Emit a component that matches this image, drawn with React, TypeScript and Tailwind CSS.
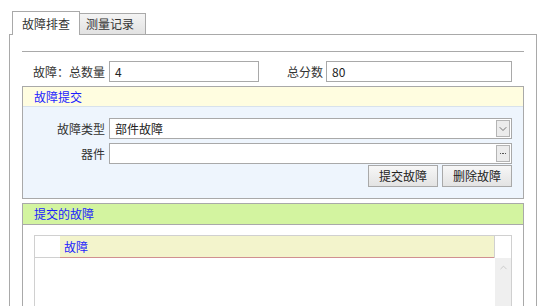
import { ChevronDown, ChevronUp } from "lucide-react";

const font = "font-['Microsoft_YaHei','Noto_Sans_CJK_SC',sans-serif]";

function Field({ value, width, addon }: { value: string; width: string; addon?: "select" | "more" }) {
  return (
    <div className={`flex h-[21px] items-center border border-[#a9a9a9] bg-white pl-[5px] pr-[1px] ${width}`}>
      <span className="flex-1 text-[12px] leading-none text-[#222]">{value}</span>
      {addon === "select" && (
        <span className="flex h-[17px] w-[14px] items-center justify-center border border-[#b4b4b4] bg-[#ececec]">
          <ChevronDown size={12} strokeWidth={1.6} className="text-[#555]" />
        </span>
      )}
      {addon === "more" && (
        <span className="flex h-[17px] w-[14px] items-center justify-center gap-[1px] border border-[#b4b4b4] bg-[#ececec]">
          <span className="h-[1.5px] w-[1.5px] bg-[#555]" />
          <span className="h-[1.5px] w-[1.5px] bg-[#555]" />
          <span className="h-[1.5px] w-[1.5px] bg-[#555]" />
        </span>
      )}
    </div>
  );
}

function Button({ label }: { label: string }) {
  return (
    <button className="h-[22px] w-[70px] border border-[#a9a9a9] bg-gradient-to-b from-[#f7f7f7] to-[#e3e3e3] text-[12px] leading-none text-[#222]">
      {label}
    </button>
  );
}

export default function App() {
  return (
    <div className={`h-[306px] w-[547px] overflow-hidden bg-white ${font}`}>
      <div className="ml-[9px] w-[528px] pt-[11px]">
        {/* tabs */}
        <div className="flex h-[23px] pl-[3px]">
          <div className="relative z-10 flex h-[24px] w-[68px] items-center border border-b-0 border-[#a9a9a9] bg-white pl-[9px] text-[12px] leading-none text-[#333]">
            故障排查
          </div>
          <div className="mt-[2px] flex h-[21px] w-[66px] items-center border-t border-r border-[#a9a9a9] bg-gradient-to-b from-[#f4f4f4] to-[#e2e2e2] pl-[6px] text-[12px] leading-none text-[#333]">
            测量记录
          </div>
        </div>

        {/* panel */}
        <div className="h-[300px] border border-b-0 border-[#a9a9a9] px-[12px] pt-[16px]">
          <div className="h-px bg-[#a9a9a9]" />

          <div className="mt-[9px] flex items-center">
            <span className="w-[87px] pr-[4px] text-right text-[12px] leading-none text-[#333]">故障：总数量</span>
            <Field value="4" width="w-[150px]" />
            <span className="w-[67px] pr-[3px] text-right text-[12px] leading-none text-[#333]">总分数</span>
            <Field value="80" width="w-[186px]" />
          </div>

          {/* 故障提交 */}
          <div className="mt-[4px] border border-[#a9a9a9]">
            <div className="flex h-[20px] items-center border-b border-[#d8e2ec] bg-[#fffde0] pl-[11px] pt-[1px] text-[12px] leading-none text-[#1c1cff]">
              故障提交
            </div>
            <div className="bg-[#eef5fd] pb-[11px] pt-[11px]">
              <div className="flex items-center">
                <span className="w-[86px] pr-[4px] text-right text-[12px] leading-none text-[#333]">故障类型</span>
                <Field value="部件故障" width="w-[403px]" addon="select" />
              </div>
              <div className="mt-[4px] flex items-center">
                <span className="w-[86px] pr-[4px] text-right text-[12px] leading-none text-[#333]">器件</span>
                <Field value="" width="w-[403px]" addon="more" />
              </div>
              <div className="mr-[11px] mt-[1px] flex justify-end gap-[4px]">
                <Button label="提交故障" />
                <Button label="删除故障" />
              </div>
            </div>
          </div>

          {/* 提交的故障 */}
          <div className="mt-[4px] h-[120px] border border-[#a9a9a9]">
            <div className="flex h-[21px] items-center border-b border-[#a9a9a9] bg-[#d3f4a0] pl-[11px] text-[12px] leading-none text-[#1c1cff]">
              提交的故障
            </div>
            <div className="pl-[11px] pt-[10px]">
              <div className="h-[100px] w-[478px] border border-[#d0d0d0]">
                <div className="flex h-[22px]">
                  <div className="w-[25px] border-b border-[#d0d0d0]" />
                  <div className="flex flex-1 items-center border-b border-[#d09090] bg-[#f3f4cc] pl-[4px] text-[12px] leading-none text-[#1c1cff]">
                    故障
                  </div>
                  <div className="w-[17px] border-l border-[#d0d0d0] bg-white" />
                </div>
                <div className="flex h-[60px]">
                  <div className="flex-1" />
                  <div className="flex w-[16px] justify-center bg-[#efefef] pt-[4px]">
                    <ChevronUp size={11} strokeWidth={1.5} className="text-[#bbb]" />
                  </div>
                </div>
              </div>
            </div>
          </div>
        </div>
      </div>
    </div>
  );
}
